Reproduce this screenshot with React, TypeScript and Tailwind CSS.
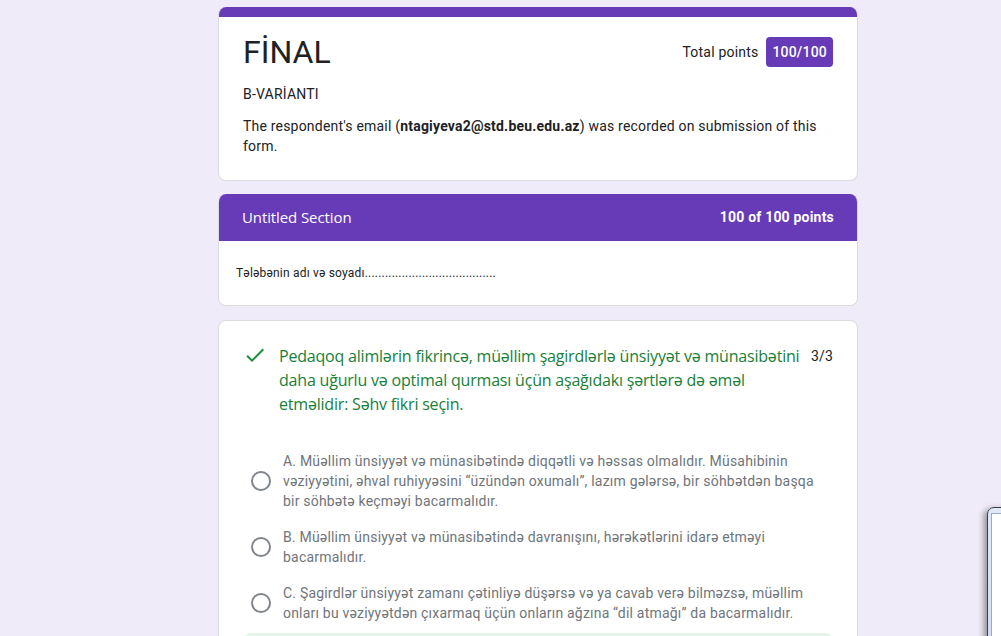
import React from "react";

const roboto = { fontFamily: "Roboto, 'Liberation Sans', Arial, sans-serif" };
const gsans = { fontFamily: "'Open Sans', Roboto, Arial, sans-serif" };

function Radio() {
  return (
    <div className="w-5 h-5 rounded-full border-2 border-[#80868b] shrink-0 box-border" />
  );
}

function Option({ children }: { children: React.ReactNode }) {
  return (
    <div className="flex items-center py-2 pl-2 pr-[6px]">
      <Radio />
      <div className="ml-3 text-[14px] leading-5 tracking-[0.2px] text-[#70757a]">{children}</div>
    </div>
  );
}

export default function App() {
  return (
    <div className="relative h-[636px] overflow-hidden bg-[#f0ebf8]" style={roboto}>
      <div className="ml-[218px] w-[640px] pt-[7px]">
        {/* Card 1 */}
        <div className="bg-white rounded-lg overflow-hidden border-x border-b border-[#dadce0]">
          <div className="h-[10px] bg-[#673ab7] -mx-px" />
          <div className="px-6 pt-5 pb-6">
            <div className="flex items-center justify-between h-[30px]">
              <div className="text-[32px] leading-[30px] text-[#202124]">FİNAL</div>
              <div className="flex items-center tracking-[0.2px]">
                <span className="text-[14px] text-[#202124] mr-2">Total points</span>
                <span className="h-[30px] px-[6px] flex items-center rounded bg-[#673ab7] text-white text-[14px] font-medium">
                  100/100
                </span>
              </div>
            </div>
            <div className="mt-[17px] text-[14px] leading-5 tracking-[0.2px] text-[#202124]">B-VARİANTI</div>
            <div className="mt-3 text-[14px] leading-5 tracking-[0.2px] text-[#202124]">
              The respondent's email (<span className="font-bold">ntagiyeva2@std.beu.edu.az</span>) was recorded on submission of this form.
            </div>
          </div>
        </div>

        {/* Card 2 */}
        <div className="mt-[13px] bg-white rounded-lg overflow-hidden border-x border-b border-[#dadce0]">
          <div className="h-[47px] bg-[#673ab7] -mx-px flex items-center justify-between pl-6 pr-6">
            <span className="text-white text-[15px] font-medium tracking-[-0.1px]" style={gsans}>Untitled Section</span>
            <span className="text-white text-[14px] font-bold tracking-[0.2px]">100 of 100 points</span>
          </div>
          <div className="pl-[17px] pt-6 pb-6 text-[12px] leading-4 tracking-[0.2px] text-[#202124]">
            Tələbənin adı və soyadı.......................................
          </div>
        </div>

        {/* Card 3 */}
        <div className="mt-[14px] bg-white rounded-lg border border-[#dadce0] px-6 pt-[22px] pb-6">
          <div className="flex items-start">
            <svg width="24" height="24" viewBox="0 0 24 24" className="shrink-0">
              <path d="M9 16.2L4.8 12l-1.4 1.4L9 19 21 7l-1.4-1.4L9 16.2z" fill="#1e8e3e" />
            </svg>
            <div className="ml-3 flex-1 text-[16px] leading-6 tracking-[-0.2px] text-[#188038] pt-[1px]" style={gsans}>
              Pedaqoq alimlərin fikrincə, müəllim şagirdlərlə ünsiyyət və münasibətini daha uğurlu və optimal qurması üçün aşağıdakı şərtlərə də əməl etməlidir: Səhv fikri seçin.
            </div>
            <div className="ml-2 text-[14px] leading-6 tracking-[0.2px] text-[#202124] pt-[1px]">3/3</div>
          </div>
          <div className="mt-[27px]">
            <Option>
              A. Müəllim ünsiyyət və münasibətində diqqətli və həssas olmalıdır. Müsahibinin vəziyyətini, əhval ruhiyyəsini “üzündən oxumalı”, lazım gələrsə, bir söhbətdən başqa bir söhbətə keçməyi bacarmalıdır.
            </Option>
            <Option>
              B. Müəllim ünsiyyət və münasibətində davranışını, hərəkətlərini idarə etməyi bacarmalıdır.
            </Option>
            <Option>
              C. Şagirdlər ünsiyyət zamanı çətinliyə düşərsə və ya cavab verə bilməzsə, müəllim onları bu vəziyyətdən çıxarmaq üçün onların ağzına “dil atmağı” da bacarmalıdır.
            </Option>
          </div>
          <div className="mt-[2px] h-[80px] rounded-lg bg-[#e6f4ea]" />
        </div>
      </div>

      {/* partially visible window at right edge */}
      <div className="absolute left-[987px] top-[507px] w-[40px] h-[200px] rounded-tl-[7px] border border-[#3a3f47] bg-gradient-to-b from-[#dfe9f6] to-[#c7d9ef] shadow-[-3px_2px_6px_rgba(0,0,0,0.4)]">
        <div className="absolute left-[3px] top-[5px] right-0 bottom-0 bg-white border-l border-t border-[#97acc8]" />
      </div>
    </div>
  );
}
